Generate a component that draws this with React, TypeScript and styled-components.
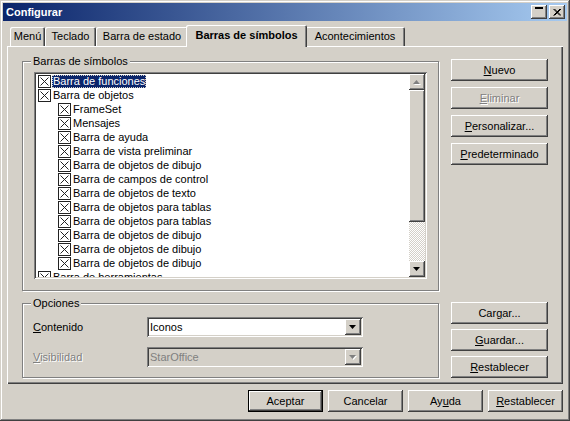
import React from 'react';
import styled, {createGlobalStyle, css} from 'styled-components';

const FACE = `#d4d0c8`;

const GlobalStyle = createGlobalStyle`
  html, body {
    margin: 0;
    padding: 0;
    background: ${FACE};
  }
  body {
    font-family: "Liberation Sans", Arial, sans-serif;
    font-size: 11px;
    color: #000;
  }
  * {
    box-sizing: border-box;
  }
`;

const raised = css`
  background: ${FACE};
  box-shadow: inset -1px -1px #404040, inset 1px 1px #fff, inset -2px -2px #808080, inset 2px 2px ${FACE};
`;

const sunken = css`
  box-shadow: inset 1px 1px #808080, inset -1px -1px #fff, inset 2px 2px #404040, inset -2px -2px ${FACE};
`;

const Window = styled.div`
  display: flex;
  flex-direction: column;
  width: 570px;
  height: 421px;
  padding: 3px;
  background: ${FACE};
  box-shadow: inset -1px -1px #404040, inset 1px 1px ${FACE}, inset -2px -2px #808080, inset 2px 2px #fff;
  overflow: hidden;
`;

const TitleBar = styled.div`
  display: flex;
  align-items: center;
  height: 18px;
  padding: 0 2px 0 3px;
  background: linear-gradient(to right, #0a246a, #a6caf0);
`;

const Title = styled.span`
  color: #fff;
  font-weight: bold;
  font-size: 11px;
`;

const TitleButtons = styled.div`
  display: flex;
  gap: 2px;
  margin-left: auto;
`;

const TitleButton = styled.div`
  ${raised};
  display: flex;
  align-items: center;
  justify-content: center;
  width: 16px;
  height: 14px;
`;

const Body = styled.div`
  display: flex;
  flex-direction: column;
  padding: 0 4px;
`;

const TabStrip = styled.div`
  display: flex;
  align-items: flex-end;
  height: 21px;
  margin-top: 4px;
  padding-left: 3px;
`;

const Tab = styled.div<{w: number; active?: boolean}>`
  display: flex;
  align-items: center;
  justify-content: center;
  width: ${({w}) => w}px;
  height: 19px;
  padding-bottom: 1px;
  background: ${FACE};
  border-top-left-radius: 2px;
  border-top-right-radius: 2px;
  box-shadow: inset 1px 1px #fff, inset -1px 0 #404040, inset -2px 0 #808080;
  white-space: nowrap;

  ${({active}) => active && css`
    position: relative;
    z-index: 1;
    height: 22px;
    margin: 0 -2px -1px;
    padding-bottom: 2px;
    font-weight: bold;
  `}
`;

const Panel = styled.div`
  display: flex;
  gap: 12px;
  height: 338px;
  padding: 15px 15px 6px;
  box-shadow: inset 1px 1px #fff, inset -1px -1px #404040, inset -2px -2px #808080;
`;

const LeftCol = styled.div`
  display: flex;
  flex-direction: column;
  gap: 12px;
  width: 417px;
`;

const RightCol = styled.div`
  display: flex;
  flex-direction: column;
  gap: 6px;
  width: 97px;
  margin-top: -2px;
`;

const LowerButtons = styled.div`
  display: flex;
  flex-direction: column;
  gap: 5px;
  margin-top: auto;
`;

const Group = styled.div<{h: number}>`
  position: relative;
  height: ${({h}) => h}px;
  border: 1px solid #808080;
  box-shadow: inset 1px 1px #fff, 1px 1px #fff;
`;

const Legend = styled.span`
  position: absolute;
  top: -7px;
  left: 8px;
  padding: 0 2px;
  line-height: 13px;
  background: ${FACE};
`;

const ListBox = styled.div`
  ${sunken};
  display: flex;
  width: 393px;
  height: 207px;
  margin: 10px 0 0 11px;
  padding: 2px;
  background: #fff;
`;

const Tree = styled.div`
  flex: 1;
  overflow: hidden;
  padding-left: 2px;
`;

const Row = styled.div<{level: number}>`
  display: flex;
  align-items: center;
  height: 14px;
  padding-left: ${({level}) => level * 20}px;
  white-space: nowrap;
`;

const Label = styled.span<{selected?: boolean}>`
  margin-left: 1px;
  padding: 0 1px;
  line-height: 13px;

  ${({selected}) => selected && css`
    background: #0a246a;
    color: #fff;
    outline: 1px dotted #d4d0c8;
    outline-offset: -1px;
  `}
`;

const ScrollBar = styled.div`
  display: flex;
  flex-direction: column;
  width: 16px;
`;

const ScrollButton = styled.div`
  ${raised};
  display: flex;
  align-items: center;
  justify-content: center;
  width: 16px;
  height: 16px;
`;

const Thumb = styled.div`
  ${raised};
  height: 132px;
`;

const Track = styled.div`
  flex: 1;
  background-image: repeating-conic-gradient(#fff 0 25%, ${FACE} 0 50%);
  background-size: 2px 2px;
`;

const Options = styled.div`
  display: flex;
  flex-direction: column;
  gap: 10px;
  padding: 13px 0 0 10px;
`;

const OptionRow = styled.div`
  display: flex;
  align-items: center;
  height: 20px;
`;

const OptionLabel = styled.span<{disabled?: boolean}>`
  width: 114px;
  color: ${({disabled}) => (disabled ? `#808080` : `#000`)};
  text-shadow: ${({disabled}) => (disabled ? `1px 1px #fff` : `none`)};
`;

const Combo = styled.div<{disabled?: boolean}>`
  ${sunken};
  display: flex;
  align-items: center;
  width: 216px;
  height: 20px;
  padding: 2px;
  background: ${({disabled}) => (disabled ? FACE : `#fff`)};
  color: ${({disabled}) => (disabled ? `#808080` : `#000`)};
`;

const ComboText = styled.span`
  flex: 1;
  padding-left: 1px;
`;

const Button = styled.div<{w: number; disabled?: boolean; isDefault?: boolean}>`
  ${raised};
  display: flex;
  align-items: center;
  justify-content: center;
  width: ${({w}) => w}px;
  height: 22px;
  color: ${({disabled}) => (disabled ? `#808080` : `#000`)};
  text-shadow: ${({disabled}) => (disabled ? `1px 1px #fff` : `none`)};

  ${({isDefault}) => isDefault && css`
    box-shadow: inset 0 0 0 1px #000, inset -2px -2px #404040, inset 2px 2px #fff, inset -3px -3px #808080;
  `}
`;

const ButtonBar = styled.div`
  display: flex;
  justify-content: flex-end;
  gap: 5px;
  margin-top: 6px;
`;

const Check = () => (
  <svg width="13" height="13" viewBox="0 0 13 13">
    <rect x="0.5" y="0.5" width="12" height="12" fill="#fff" stroke="#222" />
    <path d="M2.5 2.5 L10.5 10.5 M10.5 2.5 L2.5 10.5" stroke="#222" strokeWidth="1" />
  </svg>
);

const Arrow = ({up, disabled}: {up?: boolean; disabled?: boolean}) => (
  <svg width="8" height="5" viewBox="0 0 8 5">
    {disabled && <path d={up ? `M4.5 1 L8 5 L1 5 Z` : `M1 1 L8 1 L4.5 5 Z`} fill="#fff" />}
    <path
      d={up ? `M3.5 0 L7 4 L0 4 Z` : `M0 0 L7 0 L3.5 4 Z`}
      fill={disabled ? `#808080` : `#000`}
    />
  </svg>
);

const treeItems: {text: string; level: number}[] = [
  {text: `Barra de funciones`, level: 0},
  {text: `Barra de objetos`, level: 0},
  {text: `FrameSet`, level: 1},
  {text: `Mensajes`, level: 1},
  {text: `Barra de ayuda`, level: 1},
  {text: `Barra de vista preliminar`, level: 1},
  {text: `Barra de objetos de dibujo`, level: 1},
  {text: `Barra de campos de control`, level: 1},
  {text: `Barra de objetos de texto`, level: 1},
  {text: `Barra de objetos para tablas`, level: 1},
  {text: `Barra de objetos para tablas`, level: 1},
  {text: `Barra de objetos de dibujo`, level: 1},
  {text: `Barra de objetos de dibujo`, level: 1},
  {text: `Barra de objetos de dibujo`, level: 1},
  {text: `Barra de herramientas`, level: 0},
];

const tabs = [
  {text: `Menú`, w: 35},
  {text: `Teclado`, w: 51},
  {text: `Barra de estado`, w: 92},
  {text: `Barras de símbolos`, w: 121, active: true},
  {text: `Acontecimientos`, w: 100},
];

const App = () => {
  return (
    <>
      <GlobalStyle />
      <Window>
        <TitleBar>
          <Title>Configurar</Title>
          <TitleButtons>
            <TitleButton>
              <svg width="10" height="10" viewBox="0 0 10 10">
                <rect x="1" y="0" width="8" height="2" fill="#000" />
              </svg>
            </TitleButton>
            <TitleButton>
              <svg width="8" height="7" viewBox="0 0 8 7">
                <path d="M0.5 0 L7 6.5 M1.5 0 L8 6.5 M7 0 L0.5 6.5 M8 0 L1.5 6.5" stroke="#000" strokeWidth="1" />
              </svg>
            </TitleButton>
          </TitleButtons>
        </TitleBar>

        <Body>
          <TabStrip>
            {tabs.map((tab, i) => (
              <Tab key={i} w={tab.w} active={tab.active}>{tab.text}</Tab>
            ))}
          </TabStrip>

          <Panel>
            <LeftCol>
              <Group h={230}>
                <Legend>Barras de símbolos</Legend>
                <ListBox>
                  <Tree>
                    {treeItems.map((item, i) => (
                      <Row key={i} level={item.level}>
                        <Check />
                        <Label selected={i === 0}>{item.text}</Label>
                      </Row>
                    ))}
                  </Tree>
                  <ScrollBar>
                    <ScrollButton><Arrow up disabled /></ScrollButton>
                    <Thumb />
                    <Track />
                    <ScrollButton><Arrow /></ScrollButton>
                  </ScrollBar>
                </ListBox>
              </Group>

              <Group h={75}>
                <Legend>Opciones</Legend>
                <Options>
                  <OptionRow>
                    <OptionLabel><u>C</u>ontenido</OptionLabel>
                    <Combo>
                      <ComboText>Iconos</ComboText>
                      <ScrollButton><Arrow /></ScrollButton>
                    </Combo>
                  </OptionRow>
                  <OptionRow>
                    <OptionLabel disabled><u>V</u>isibilidad</OptionLabel>
                    <Combo disabled>
                      <ComboText>StarOffice</ComboText>
                      <ScrollButton><Arrow disabled /></ScrollButton>
                    </Combo>
                  </OptionRow>
                </Options>
              </Group>
            </LeftCol>

            <RightCol>
              <Button w={97}><u>N</u>uevo</Button>
              <Button w={97} disabled><u>E</u>liminar</Button>
              <Button w={97}><u>P</u>ersonalizar...</Button>
              <Button w={97}><u>P</u>redeterminado</Button>
              <LowerButtons>
                <Button w={97}>Car<u>g</u>ar...</Button>
                <Button w={97}><u>G</u>uardar...</Button>
                <Button w={97}><u>R</u>establecer</Button>
              </LowerButtons>
            </RightCol>
          </Panel>

          <ButtonBar>
            <Button w={75} isDefault>Aceptar</Button>
            <Button w={75}>Cancelar</Button>
            <Button w={75}>Ay<u>u</u>da</Button>
            <Button w={75}><u>R</u>establecer</Button>
          </ButtonBar>
        </Body>
      </Window>
    </>
  );
};

export default App;
